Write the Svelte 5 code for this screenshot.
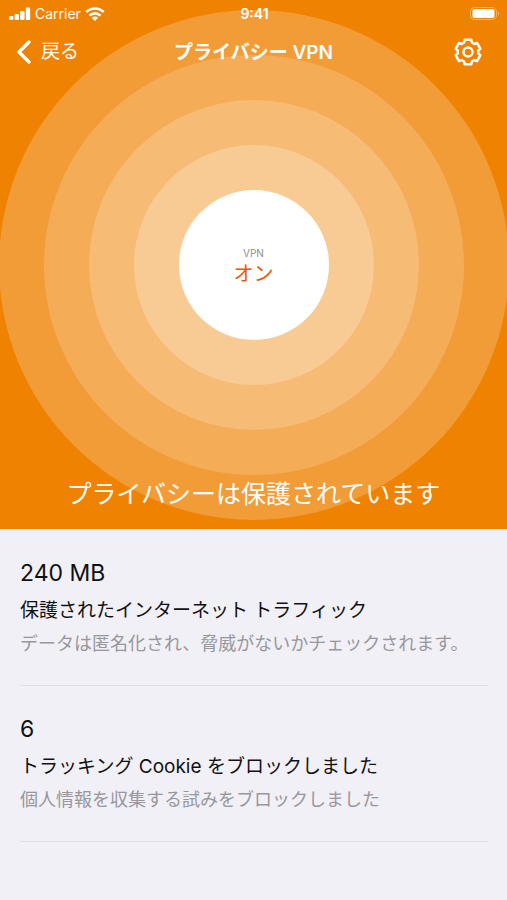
<script lang="ts">
	interface Stat {
		value: string
		title: string
		detail: string
	}

	let enabled = $state(true)

	const stats: Stat[] = [
		{
			value: '240 MB',
			title: '保護されたインターネット トラフィック',
			detail: 'データは匿名化され、脅威がないかチェックされます。'
		},
		{
			value: '6',
			title: 'トラッキング Cookie をブロックしました',
			detail: '個人情報を収集する試みをブロックしました'
		}
	]
</script>

<main class="screen">
	<section class="hero">
		<div class="ring ring-1">
			<div class="ring ring-2">
				<div class="ring ring-3">
					<div class="ring ring-4"></div>
				</div>
			</div>
		</div>

		<div class="status-bar">
			<div class="carrier">
				<svg width="22" height="14" viewBox="0 0 22 14" fill="#fff" aria-hidden="true">
					<rect x="0" y="9" width="4.4" height="4" rx="1.2" />
					<rect x="5.6" y="7" width="4.4" height="6" rx="1.2" />
					<rect x="11.2" y="4" width="4.4" height="9" rx="1.2" />
					<rect x="16.8" y="0.5" width="4.4" height="12.5" rx="1.2" />
				</svg>
				<span>Carrier</span>
				<svg width="20" height="14" viewBox="0 0 20 14" fill="none" stroke="#fff" stroke-width="2.6" aria-hidden="true">
					<path d="M1.3 5 A12.4 12.4 0 0 1 18.7 5" />
					<path d="M4.5 8.6 A8 8 0 0 1 15.5 8.6" />
					<path d="M10 14 L6.8 10.8 A4.5 4.5 0 0 1 13.2 10.8 Z" fill="#fff" stroke="none" />
				</svg>
			</div>
			<span class="time">9:41</span>
			<svg class="battery" width="30" height="14" viewBox="0 0 30 14" aria-hidden="true">
				<rect x="0.5" y="0.5" width="26" height="12" rx="4" fill="none" stroke="#fff" stroke-opacity="0.4" />
				<rect x="2.5" y="2" width="22" height="9" rx="2" fill="#fff" />
				<path d="M28 4.5 Q30 6.5 28 8.5 Z" fill="#fff" fill-opacity="0.45" />
			</svg>
		</div>

		<nav class="nav-bar">
			<a class="back" href="#back">
				<svg width="14" height="24" viewBox="0 0 14 24" fill="none" stroke="#fff" stroke-width="3.4" stroke-linecap="round" stroke-linejoin="round" aria-hidden="true">
					<path d="M12 2 L2 12 L12 22" />
				</svg>
				<span>戻る</span>
			</a>
			<h1>プライバシー VPN</h1>
			<button class="settings" type="button" aria-label="設定">
				<svg width="28" height="28" viewBox="0 0 28 28" fill="none" stroke="#fff" stroke-width="2.5" stroke-linejoin="round" aria-hidden="true">
					<path d="M10.7 1.7 H17.3 L17.9 4.5 L20.3 5.9 L23 5 L26.3 10.7 L24.2 12.6 V15.4 L26.3 17.3 L23 23 L20.3 22.1 L17.9 23.5 L17.3 26.3 H10.7 L10.1 23.5 L7.7 22.1 L5 23 L1.7 17.3 L3.8 15.4 V12.6 L1.7 10.7 L5 5 L7.7 5.9 L10.1 4.5 Z" />
					<circle cx="14" cy="14" r="4.5" />
				</svg>
			</button>
		</nav>

		<button class="toggle" type="button" aria-pressed={enabled} onclick={() => { enabled = !enabled }}>
			<span class="toggle-label">VPN</span>
			<span class="toggle-state">{enabled ? 'オン' : 'オフ'}</span>
		</button>

		<p class="headline">プライバシーは保護されています</p>
	</section>

	<section class="stats">
		{#each stats as stat}
			<article class="stat">
				<p class="value">{stat.value}</p>
				<h2>{stat.title}</h2>
				<p class="detail">{stat.detail}</p>
			</article>
		{/each}
	</section>
</main>

<style>
	:global(body) {
		background: #f1f0f6;
	}

	.screen {
		font-family: Inter, 'Noto Sans CJK JP', sans-serif;
		color: #111;
	}

	h1,
	h2,
	p {
		margin: 0;
	}

	button {
		border: none;
		padding: 0;
		font-family: inherit;
		cursor: pointer;
	}

	.hero {
		position: relative;
		overflow: hidden;
		display: flex;
		flex-direction: column;
		align-items: center;
		background: #ef8200;
		color: #fff;
		padding-bottom: 17px;
	}

	.ring {
		box-sizing: border-box;
		border-radius: 50%;
		padding: 45px;
	}

	.ring-1 {
		position: absolute;
		top: 10px;
		left: 50%;
		transform: translateX(-50%);
		width: 510px;
		height: 510px;
		background: #f29c37;
	}

	.ring-2,
	.ring-3,
	.ring-4 {
		height: 100%;
	}

	.ring-2 {
		background: #f4ac57;
	}

	.ring-3 {
		background: #f6bb75;
	}

	.ring-4 {
		background: #f8cb94;
	}

	.status-bar,
	.nav-bar {
		position: relative;
		box-sizing: border-box;
		width: 100%;
		display: grid;
		grid-template-columns: 1fr auto 1fr;
		align-items: center;
	}

	.status-bar {
		height: 27px;
		padding: 0 7px 0 9px;
		font-size: 14px;
	}

	.carrier {
		display: flex;
		align-items: center;
		gap: 4px;
	}

	.time {
		font-weight: 600;
	}

	.battery {
		justify-self: end;
	}

	.nav-bar {
		height: 50px;
		padding: 0 25px 0 17px;
		grid-template-columns: 90px 1fr 82px;
	}

	.back {
		display: flex;
		align-items: center;
		gap: 10px;
		color: #fff;
		font-size: 19px;
		line-height: 26px;
		text-decoration: none;
	}

	h1 {
		padding-top: 2px;
		font-size: 19px;
		font-weight: 600;
		line-height: 26px;
		text-align: center;
	}

	.settings {
		justify-self: end;
		display: flex;
		background: none;
	}

	.toggle {
		position: relative;
		box-sizing: border-box;
		display: flex;
		flex-direction: column;
		align-items: center;
		justify-content: center;
		width: 150px;
		height: 150px;
		margin: 113px 0 136px;
		padding-top: 6px;
		border-radius: 50%;
		background: #fff;
	}

	.toggle-label {
		font-size: 10px;
		line-height: 12px;
		color: #8e8e93;
	}

	.toggle-state {
		font-size: 20px;
		line-height: 30px;
		color: #e8590c;
	}

	.headline {
		position: relative;
		font-size: 25px;
		line-height: 36px;
		text-align: center;
	}

	.stats {
		padding: 1px 19px 0 20px;
	}

	.stat {
		padding: 27px 0 26px;
		border-bottom: 1px solid #dfdee4;
	}

	.value {
		font-size: 23px;
		line-height: 32px;
	}

	h2 {
		margin-top: 4px;
		font-size: 19px;
		font-weight: 400;
		line-height: 36px;
	}

	.detail {
		font-size: 18px;
		line-height: 30px;
		color: #98979d;
	}
</style>
